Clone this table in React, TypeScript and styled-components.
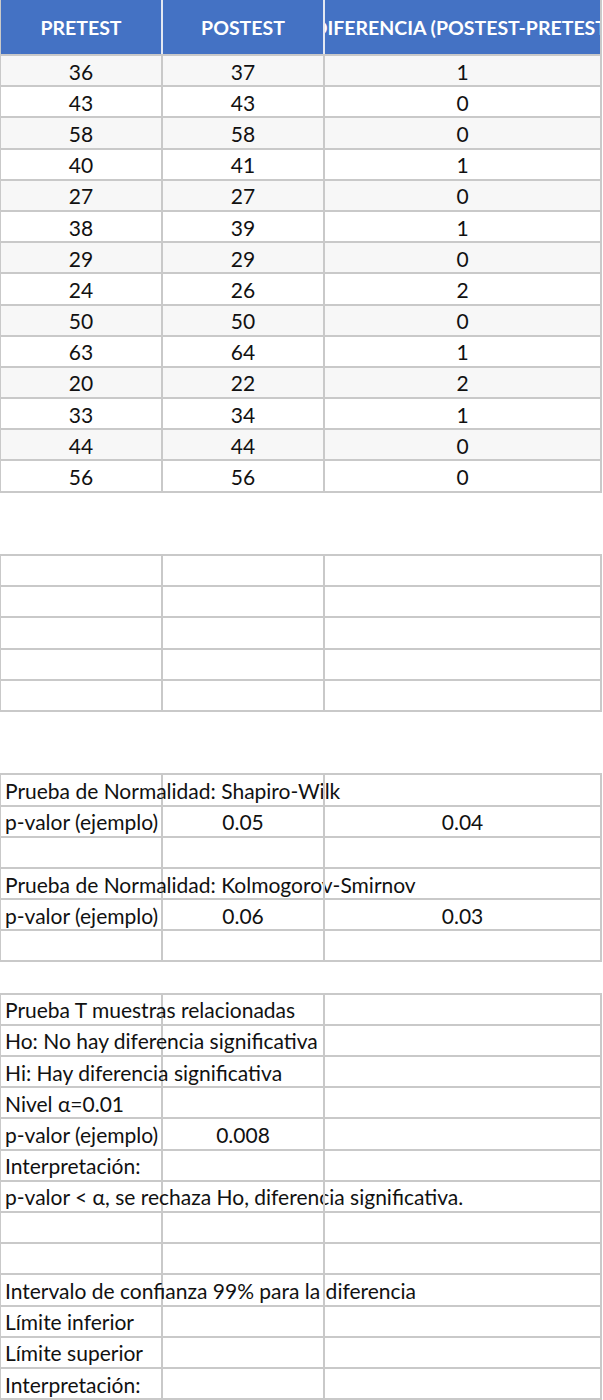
import * as React from 'react';
import styled, { createGlobalStyle } from 'styled-components';

const ROW = 31.2;

const GlobalStyle = createGlobalStyle`
  body {
    margin: 0;
    background: #ffffff;
    font-family: Lato, 'Open Sans', sans-serif;
    color: #111111;
  }
`;

type CellValue = string | number | null;

const pairs: [number, number][] = [
  [36, 37],
  [43, 43],
  [58, 58],
  [40, 41],
  [27, 27],
  [38, 39],
  [29, 29],
  [24, 26],
  [50, 50],
  [63, 64],
  [20, 22],
  [33, 34],
  [44, 44],
  [56, 56],
];

const normality: CellValue[][] = [
  ['Prueba de Normalidad: Shapiro-Wilk', null, null],
  ['p-valor (ejemplo)', '0.05', '0.04'],
  [null, null, null],
  ['Prueba de Normalidad: Kolmogorov-Smirnov', null, null],
  ['p-valor (ejemplo)', '0.06', '0.03'],
  [null, null, null],
];

const tTest: CellValue[][] = [
  ['Prueba T muestras relacionadas', null, null],
  ['Ho: No hay diferencia significativa', null, null],
  ['Hi: Hay diferencia significativa', null, null],
  ['Nivel α=0.01', null, null],
  ['p-valor (ejemplo)', '0.008', null],
  ['Interpretación:', null, null],
  ['p-valor < α, se rechaza Ho, diferencia significativa.', null, null],
  [null, null, null],
  [null, null, null],
  ['Intervalo de confianza 99% para la diferencia', null, null],
  ['Límite inferior', null, null],
  ['Límite superior', null, null],
  ['Interpretación:', null, null],
];

const App = () => {
  return (
    <Page>
      <GlobalStyle />
      <Sheet>
        <HeaderRow>
          <HeaderCell>Pretest</HeaderCell>
          <HeaderCell>Postest</HeaderCell>
          <HeaderCell>Diferencia (Postest-Pretest)</HeaderCell>
        </HeaderRow>
        {pairs.map(([pre, post], i) => (
          <Row key={i} $shaded={i % 2 === 0}>
            <Cell $center>{pre}</Cell>
            <Cell $center>{post}</Cell>
            <Cell $center>{post - pre}</Cell>
          </Row>
        ))}
      </Sheet>

      <Sheet $gap={2}>
        {[0, 1, 2, 3, 4].map((i) => (
          <Row key={i}>
            <Cell />
            <Cell />
            <Cell />
          </Row>
        ))}
      </Sheet>

      <Sheet $gap={2}>
        {normality.map((r, i) => (
          <Row key={i}>
            <Cell>{r[0]}</Cell>
            <Cell $center>{r[1]}</Cell>
            <Cell $center>{r[2]}</Cell>
          </Row>
        ))}
      </Sheet>

      <Sheet $gap={1}>
        {tTest.map((r, i) => (
          <Row key={i}>
            <Cell>{r[0]}</Cell>
            <Cell $center>{r[1]}</Cell>
            <Cell $center>{r[2]}</Cell>
          </Row>
        ))}
      </Sheet>
    </Page>
  );
};

const Page = styled.div`
  width: 603px;
  height: 1400px;
  overflow: hidden;
`;

const Sheet = styled.div<{ $gap?: number }>`
  margin-top: ${({ $gap }) => ($gap ? $gap * ROW - 1 : 0)}px;
  width: 603px;
  border-left: 2px solid #c9c9c9;
  border-top: ${({ $gap }) => ($gap ? '2px solid #c9c9c9' : 'none')};
  box-sizing: border-box;
  margin-left: -1px;
`;

const HeaderRow = styled.div`
  display: grid;
  grid-template-columns: 162px 162px 1fr;
  height: 54px;
  background: #4472c4;
  border-bottom: 2px solid #c9c9c9;
  box-sizing: content-box;
`;

const HeaderCell = styled.div`
  display: flex;
  align-items: center;
  justify-content: center;
  overflow: hidden;
  white-space: nowrap;
  color: #ffffff;
  font-size: 19.5px;
  font-weight: 700;
  text-transform: uppercase;
  border-right: 2px solid #e3e8f2;
  padding-top: 1px;
  &:last-child {
    border-right: 2px solid #c9c9c9;
  }
`;

const Row = styled.div<{ $shaded?: boolean }>`
  display: grid;
  grid-template-columns: 162px 162px 1fr;
  height: ${ROW}px;
  box-sizing: border-box;
  background: ${({ $shaded }) => ($shaded ? '#f7f7f7' : '#ffffff')};
`;

const Cell = styled.div<{ $center?: boolean }>`
  display: flex;
  align-items: center;
  justify-content: ${({ $center }) => ($center ? 'center' : 'flex-start')};
  padding: 1px 4px 0;
  white-space: nowrap;
  font-size: 21px;
  color: #111111;
  border-right: 2px solid #c9c9c9;
  border-bottom: 2px solid #c9c9c9;
  box-sizing: border-box;
  min-width: 0;
`;

export default App;
